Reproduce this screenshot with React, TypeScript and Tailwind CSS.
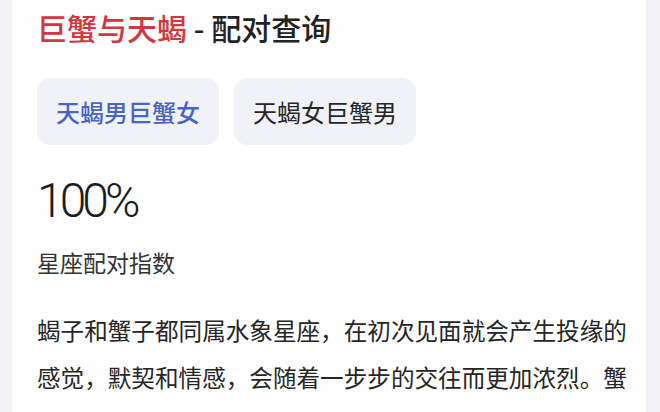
import React from "react";

function Tab({ label, active }: { label: string; active?: boolean }) {
  return (
    <div
      className={
        active
          ? "h-[67px] px-[19px] rounded-[14px] bg-[#f1f2f7] flex items-center text-[24px] leading-[32px] font-['Noto_Sans_CJK_SC',sans-serif] text-[#4865c6] font-medium"
          : "h-[67px] px-[19px] rounded-[14px] bg-[#f1f2f7] flex items-center text-[24px] leading-[32px] font-['Noto_Sans_CJK_SC',sans-serif] text-[#262626]"
      }
    >
      {label}
    </div>
  );
}

export default function App() {
  return (
    <div className="w-[660px] h-[412px] overflow-hidden bg-[#f3f3f7] flex pl-[12px] pr-[14px]">
      <div className="flex-1 bg-[#fefefe] pl-[25px] overflow-hidden flex flex-col">
        <h1 className="pt-[7px] text-[30px] leading-[40px] font-medium text-[#222] font-['Noto_Sans_CJK_SC',sans-serif]">
          <span className="text-[#d6363f]">巨蟹与天蝎</span> - 配对查询
        </h1>

        <div className="mt-[31px] flex gap-[15px]">
          <Tab label="天蝎男巨蟹女" active />
          <Tab label="天蝎女巨蟹男" />
        </div>

        <div className="mt-[28px] text-[48px] leading-[56px] font-light tracking-[-4px] text-[#1c1c1c] font-['Roboto','Noto_Sans_CJK_SC',sans-serif]">
          100%
        </div>

        <div className="mt-[17px] text-[23px] leading-[32px] text-[#333] font-['Noto_Sans_CJK_SC',sans-serif]">
          星座配对指数
        </div>

        <p className="mt-[29px] w-[592px] text-[23.6px] leading-[47px] text-[#262626] font-['Noto_Sans_CJK_SC',sans-serif]">
          蝎子和蟹子都同属水象星座，在初次见面就会产生投缘的感觉，默契和情感，会随着一步步的交往而更加浓烈。蟹
        </p>
      </div>
    </div>
  );
}
